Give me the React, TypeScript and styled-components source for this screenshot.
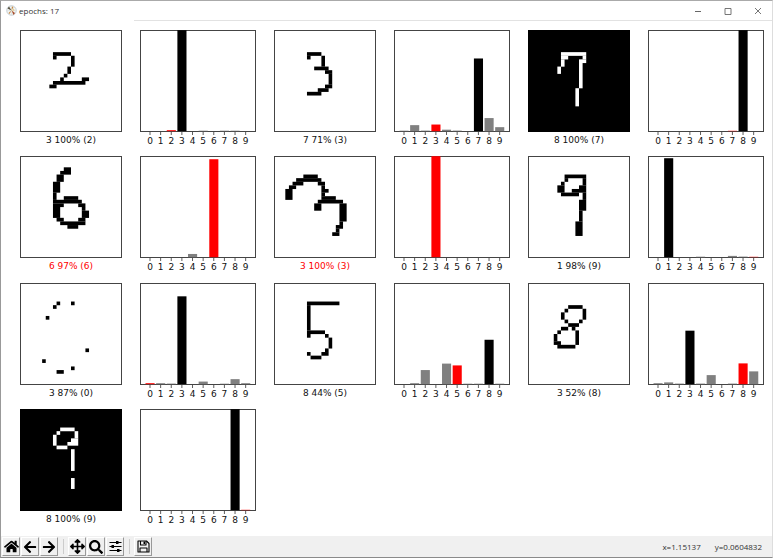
import React from "react";
import styled, { createGlobalStyle } from "styled-components";
import { FaHome, FaArrowLeft, FaArrowRight, FaArrowsAlt, FaSearch } from "react-icons/fa";

const GlobalStyle = createGlobalStyle`
  *, *::before, *::after { box-sizing: border-box; }
  body { margin: 0; background: #fff; }
`;

const Window = styled.div`
  display: flex;
  flex-direction: column;
  min-height: 100vh;
  background: #fff;
  color: #333;
  font-family: "Open Sans", "Noto Sans", sans-serif;
  font-size: 8px;
  border-top: 1px solid #aaa;
  border-left: 1px solid #999;
  border-right: 1px solid #ddd;
  border-bottom: 1px solid #8a8a8a;
`;

const TitleBar = styled.header`
  display: flex;
  align-items: center;
  gap: 2px;
  height: 19px;
  padding-left: 5px;
`;

const Title = styled.h1`
  flex: 1;
  margin: 0;
  font-size: 8px;
  font-weight: 400;
  line-height: 12px;
`;

const CaptionButton = styled.button`
  display: flex;
  align-items: center;
  justify-content: center;
  width: 28px;
  height: 19px;
  padding: 0;
  border: 0;
  background: transparent;
  color: #666;
`;

const TitleRule = styled.div`
  height: 1px;
  margin-left: 133px;
  background: #e2e2e2;
`;

const Figure = styled.main`
  flex: 1;
  display: grid;
  grid-template-columns: repeat(3, 1fr);
  column-gap: 18px;
  align-content: space-between;
  padding: 9px 8px 9px 19px;
  font-family: "DejaVu Sans", sans-serif;
`;

const Sample = styled.section`
  display: grid;
  grid-template-columns: 102fr 116fr;
  column-gap: 18px;
  align-items: start;
`;

const Digit = styled.figure`
  margin: 0;
`;

const Drawing = styled.svg`
  display: block;
  width: 100%;
  height: auto;
`;

const Prediction = styled.figcaption<{ $correct: boolean }>`
  padding-top: 2px;
  font-size: 9px;
  line-height: 12px;
  text-align: center;
  white-space: nowrap;
  color: ${(p) => (p.$correct ? "#f00" : "#111")};
`;

const TickLabel = styled.text`
  font-size: 9px;
  text-anchor: middle;
  fill: #111;
`;

const Toolbar = styled.footer`
  display: flex;
  align-items: center;
  gap: 1px;
  height: 21px;
  padding: 0 10px 0 1px;
  background: #f0f0f0;
`;

const ToolButton = styled.button`
  display: flex;
  align-items: center;
  justify-content: center;
  width: 18px;
  height: 19px;
  padding: 0;
  border: 1px solid;
  border-color: #fff #999 #999 #fff;
  background: #f0f0f0;
  color: #000;
`;

const Separator = styled.span`
  width: 8px;
  height: 15px;
  background: linear-gradient(#ccc, #ccc) center / 1px 100% no-repeat;
`;

const Coordinates = styled.output`
  display: flex;
  gap: 14px;
  margin-left: auto;
  line-height: 12px;
`;

type Run = [row: number, col: number, width: number, height?: number];

interface SampleData {
  guess: number;
  confidence: number;
  actual: number;
  inverted?: boolean;
  runs: Run[];
  bars: Record<number, number>;
}

const samples: SampleData[] = [
  {
    guess: 3, confidence: 100, actual: 2,
    runs: [[6, 9, 5], [7, 9, 1], [7, 14, 1, 3], [10, 13, 1, 2], [12, 12, 1], [13, 11, 1], [13, 17, 2], [14, 9, 9], [15, 8, 2]],
    bars: { 2: 1, 3: 100, 5: 0.5, 7: 0.5, 8: 0.5 },
  },
  {
    guess: 7, confidence: 71, actual: 3,
    runs: [[6, 9, 4], [7, 9, 1], [7, 13, 1, 3], [10, 11, 4], [11, 14, 2], [12, 15, 1, 3], [15, 14, 2], [16, 12, 3], [17, 9, 4]],
    bars: { 0: 0.5, 1: 6, 2: 0.6, 3: 6.6, 4: 1.5, 5: 0.6, 7: 72, 8: 13, 9: 4 },
  },
  {
    guess: 8, confidence: 100, actual: 7, inverted: true,
    runs: [[6, 9, 7], [7, 9, 2], [7, 15, 1], [8, 9, 1, 2], [8, 14, 2], [9, 14, 1, 7], [10, 8, 1, 2], [16, 13, 1, 5]],
    bars: { 7: 0.4, 8: 100 },
  },
  {
    guess: 6, confidence: 97, actual: 6,
    runs: [[3, 12, 2], [4, 11, 3], [5, 10, 2, 2], [7, 9, 2, 3], [10, 9, 1, 2], [11, 12, 4], [12, 9, 8], [13, 9, 3], [13, 16, 2], [14, 9, 2, 3], [14, 17, 1], [15, 17, 2, 2], [17, 10, 2], [17, 16, 2], [18, 11, 7], [19, 13, 3]],
    bars: { 4: 3.2, 6: 97 },
  },
  {
    guess: 3, confidence: 100, actual: 3,
    runs: [[5, 8, 4], [6, 6, 7], [7, 5, 3], [7, 12, 2], [8, 4, 2], [8, 13, 1], [9, 3, 2, 3], [9, 13, 2], [10, 13, 1], [11, 13, 4], [12, 12, 7], [13, 11, 2, 2], [13, 18, 2, 5], [18, 18, 1], [19, 17, 2], [20, 17, 1], [21, 16, 2]],
    bars: { 3: 100 },
  },
  {
    guess: 1, confidence: 98, actual: 9,
    runs: [[5, 10, 6], [6, 10, 1], [6, 15, 1, 2], [7, 9, 1], [8, 8, 2, 2], [8, 14, 2], [9, 12, 4], [10, 9, 5], [10, 15, 1, 2], [12, 14, 2, 3], [15, 14, 1, 3], [18, 13, 2, 4]],
    bars: { 1: 98, 4: 0.5, 7: 1.3, 8: 0.6, 9: 0.4 },
  },
  {
    guess: 3, confidence: 87, actual: 0,
    runs: [[5, 10, 1], [5, 14, 1], [6, 9, 1], [9, 7, 1], [18, 18, 1], [21, 6, 1], [23, 14, 1], [24, 10, 2]],
    bars: { 0: 1, 1: 1, 2: 0.6, 3: 87, 5: 2.6, 7: 0.5, 8: 5, 9: 1 },
  },
  {
    guess: 8, confidence: 44, actual: 5,
    runs: [[5, 9, 9], [6, 9, 1, 7], [13, 9, 5], [14, 9, 1], [14, 14, 1], [15, 15, 1, 3], [18, 14, 1], [19, 9, 1], [19, 13, 2], [20, 10, 3]],
    bars: { 1: 1, 2: 14, 4: 20.4, 5: 18.6, 6: 0.5, 7: 0.5, 8: 44, 9: 0.5 },
  },
  {
    guess: 3, confidence: 52, actual: 8,
    runs: [[6, 11, 4], [7, 10, 1], [7, 15, 1, 3], [8, 9, 1, 2], [10, 10, 1], [10, 14, 1], [11, 11, 3], [12, 9, 2], [12, 12, 1], [13, 8, 1], [13, 13, 1, 4], [14, 7, 1, 2], [16, 7, 2], [17, 8, 5]],
    bars: { 0: 1, 1: 1.8, 2: 0.6, 3: 53, 4: 0.6, 5: 9, 7: 0.6, 8: 20.6, 9: 12.7 },
  },
  {
    guess: 8, confidence: 100, actual: 9, inverted: true,
    runs: [[5, 11, 4], [6, 10, 1], [6, 15, 1, 2], [7, 9, 1, 3], [8, 14, 2], [9, 13, 3], [10, 10, 3], [11, 14, 1, 6], [19, 14, 1, 3]],
    bars: { 8: 100, 9: 0.4 },
  },
];

function DigitImage({ sample }: { sample: SampleData }) {
  const cell = 101 / 28;
  return (
    <Digit>
      <Drawing viewBox="0 0 102 102" role="img" aria-label={`Handwritten ${sample.actual}`}>
        <rect x="0.5" y="0.5" width="101" height="101" fill={sample.inverted ? "#000" : "#fff"} stroke={sample.inverted ? "#000" : "#444"} />
        <g fill={sample.inverted ? "#fff" : "#000"}>
          {sample.runs.map(([row, col, width, height = 1]) => (
            <rect key={`${row}-${col}`} x={0.5 + col * cell} y={0.5 + row * cell} width={width * cell} height={height * cell + 0.1} />
          ))}
        </g>
      </Drawing>
      <Prediction $correct={sample.guess === sample.actual}>
        {`${sample.guess} ${sample.confidence}% (${sample.actual})`}
      </Prediction>
    </Digit>
  );
}

function ProbabilityChart({ sample }: { sample: SampleData }) {
  return (
    <Drawing viewBox="0 0 116 118">
      <rect x="0.5" y="0.5" width="115" height="101" fill="#fff" stroke="#444" />
      {Array.from({ length: 10 }, (_, n) => {
        const center = 10 + n * 10.63;
        const height = (sample.bars[n] ?? 0) * 1.01;
        const fill = n === sample.actual ? "#f00" : n === sample.guess ? "#000" : "#808080";
        return (
          <g key={n}>
            {height > 0 && <rect x={center - 4.5} y={101.2 - height} width="9.1" height={height} fill={fill} />}
            <path d={`M${center} 102v3`} stroke="#333" strokeWidth="0.8" />
            <TickLabel x={center} y="114">{n}</TickLabel>
          </g>
        );
      })}
    </Drawing>
  );
}

const AppIcon = () => (
  <svg width="11" height="11" viewBox="0 0 22 22" aria-hidden="true">
    <circle cx="11" cy="11" r="9.5" fill="#f7f7f3" stroke="#a9b8c2" strokeWidth="1.4" />
    <path d="M11 2v18M2 11h18M5 5l12 12M17 5L5 17" stroke="#cbd3d6" strokeWidth="0.7" />
    <circle cx="11" cy="11" r="5" fill="none" stroke="#cbd3d6" strokeWidth="0.7" />
    <path d="M11 11L3 7l3-4z" fill="#55503f" />
    <path d="M11 11l1-8 3 1z" fill="#c98943" />
    <path d="M11 11l5-3 1 3z" fill="#e3c066" />
    <path d="M11 11l7 5-3 4z" fill="#a9502f" />
    <path d="M11 11l-4 7-2-2z" fill="#c98943" />
  </svg>
);

const SlidersIcon = () => (
  <svg width="13" height="13" viewBox="0 0 26 26" aria-hidden="true">
    <path d="M1 5h24M1 13h24M1 21h24" stroke="#000" strokeWidth="2.2" />
    <path d="M14 2h5v6h-5zM5 10h5v6H5zM16 18h5v6h-5z" fill="#000" />
  </svg>
);

const SaveIcon = () => (
  <svg width="13" height="13" viewBox="0 0 26 26" fill="none" stroke="#000" strokeWidth="2.2" strokeLinejoin="round" aria-hidden="true">
    <path d="M2 2h17l5 5v17H2z" />
    <path d="M7 2v8h11V2M6 24v-8h14v8" />
    <path d="M13 3h3v5h-3z" fill="#000" stroke="none" />
  </svg>
);

export default function App() {
  return (
    <>
      <GlobalStyle />
      <Window>
        <TitleBar>
          <AppIcon />
          <Title>epochs: 17</Title>
          <CaptionButton aria-label="Minimize">
            <svg width="8" height="8" viewBox="0 0 8 8"><path d="M1 4.5h6" stroke="currentColor" /></svg>
          </CaptionButton>
          <CaptionButton aria-label="Maximize">
            <svg width="8" height="8" viewBox="0 0 8 8"><path d="M1 1.5h6v6H1z" fill="none" stroke="currentColor" strokeWidth="0.9" /></svg>
          </CaptionButton>
          <CaptionButton aria-label="Close">
            <svg width="8" height="8" viewBox="0 0 8 8"><path d="M1 1l6 6M7 1L1 7" stroke="currentColor" strokeWidth="0.9" /></svg>
          </CaptionButton>
        </TitleBar>
        <TitleRule />
        <Figure>
          {samples.map((sample, i) => (
            <Sample key={i}>
              <DigitImage sample={sample} />
              <ProbabilityChart sample={sample} />
            </Sample>
          ))}
        </Figure>
        <Toolbar>
          <ToolButton aria-label="Home"><FaHome size={15} /></ToolButton>
          <ToolButton aria-label="Back"><FaArrowLeft size={14} /></ToolButton>
          <ToolButton aria-label="Forward"><FaArrowRight size={14} /></ToolButton>
          <Separator />
          <ToolButton aria-label="Pan"><FaArrowsAlt size={15} /></ToolButton>
          <ToolButton aria-label="Zoom"><FaSearch size={14} /></ToolButton>
          <ToolButton aria-label="Configure subplots"><SlidersIcon /></ToolButton>
          <Separator />
          <ToolButton aria-label="Save"><SaveIcon /></ToolButton>
          <Coordinates>
            <span>x=1.15137</span>
            <span>y=0.0604832</span>
          </Coordinates>
        </Toolbar>
      </Window>
    </>
  );
}
